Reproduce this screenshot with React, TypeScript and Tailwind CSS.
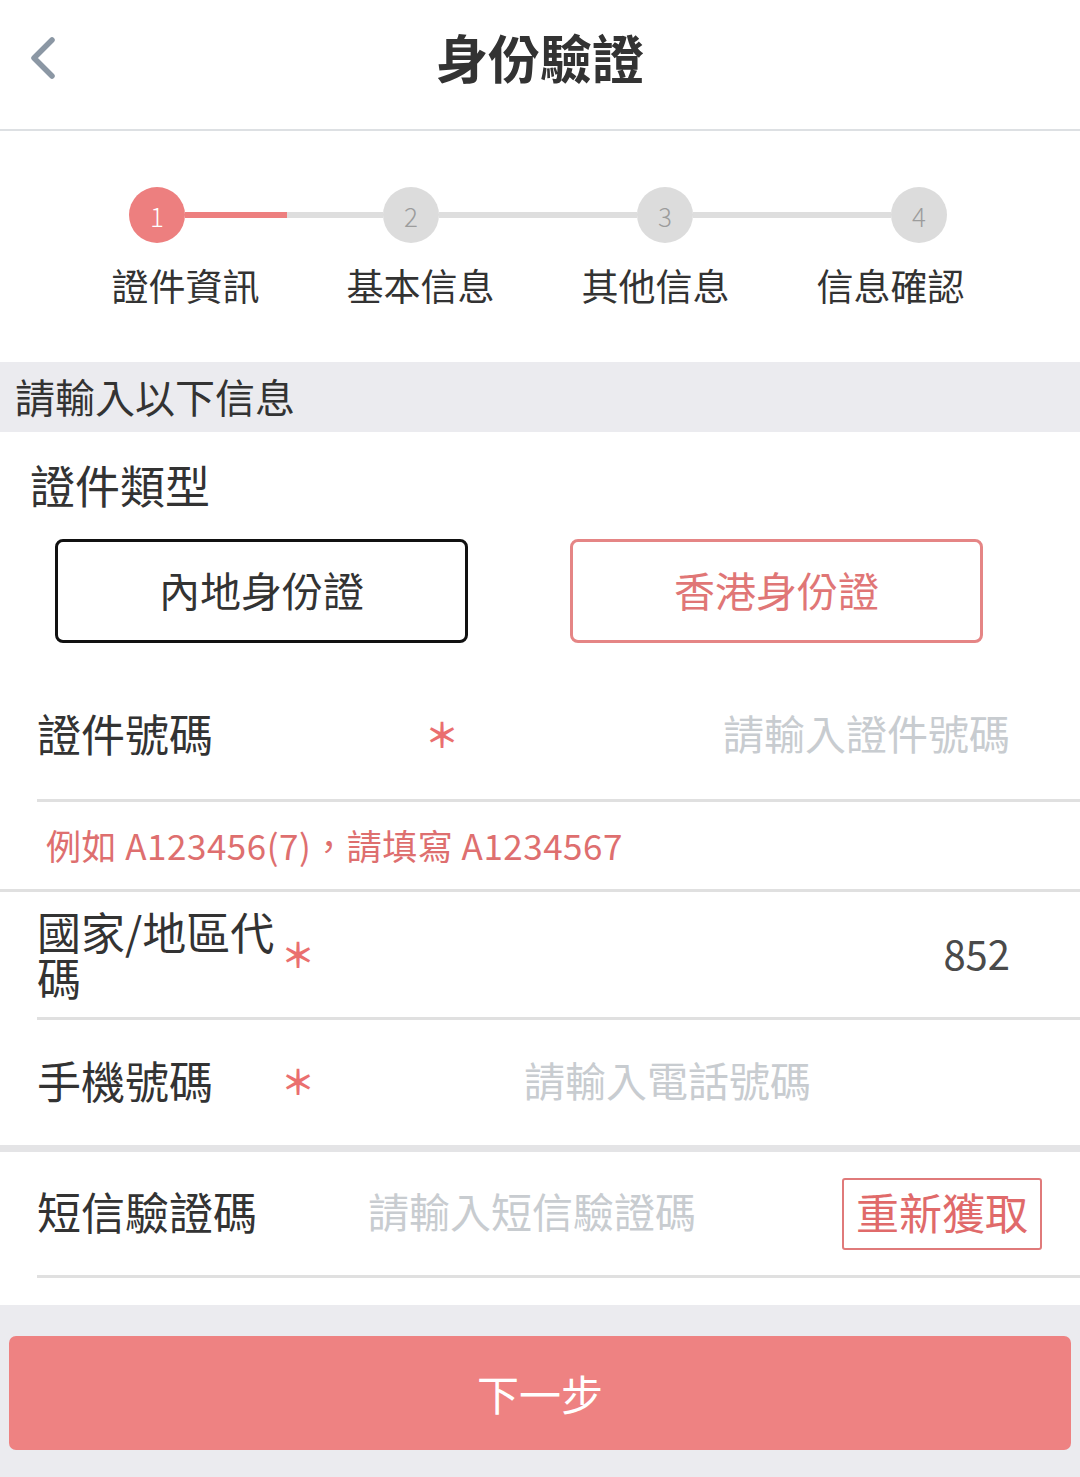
import React from "react";

const font = { fontFamily: '"Noto Sans CJK TC", "Noto Sans", sans-serif' } as const;

function Star() {
  return (
    <span className="text-[#ea6f6f] text-[34px] font-bold leading-none inline-block translate-y-[1px]">
      ＊
    </span>
  );
}

export default function App() {
  return (
    <div className="w-[1080px] h-[1477px] bg-white text-[#333333] overflow-hidden" style={font}>
      {/* Header */}
      <div className="h-[131px] flex items-start pt-[28px] border-b-2 border-[#dde0e3]">
        <div className="pl-[27px] pt-[8px] w-[100px]">
          <svg width="34" height="44" viewBox="0 0 34 44">
            <polyline points="25,4 7,22 25,40" fill="none" stroke="#8b97a4" strokeWidth="5.5" strokeLinecap="round" strokeLinejoin="round" />
          </svg>
        </div>
        <div className="flex-1 text-center text-[52px] font-bold leading-[58px] pr-[100px]">身份驗證</div>
      </div>

      {/* Steps */}
      <div className="h-[231px] pt-[56px]">
        <div className="flex items-center pl-[129px]">
          <div className="w-[56px] h-[56px] rounded-full bg-[#ed7f7f] text-white text-[26px] flex items-center justify-center font-light">1</div>
          <div className="w-[198px] h-[6px] flex">
            <div className="w-[102px] bg-[#ed7f7f]"></div>
            <div className="flex-1 bg-[#dedede]"></div>
          </div>
          <div className="w-[56px] h-[56px] rounded-full bg-[#dcdcdc] text-[#9c9c9c] text-[26px] flex items-center justify-center font-light">2</div>
          <div className="w-[198px] h-[6px] bg-[#dedede]"></div>
          <div className="w-[56px] h-[56px] rounded-full bg-[#dcdcdc] text-[#9c9c9c] text-[26px] flex items-center justify-center font-light">3</div>
          <div className="w-[198px] h-[6px] bg-[#dedede]"></div>
          <div className="w-[56px] h-[56px] rounded-full bg-[#dcdcdc] text-[#9c9c9c] text-[26px] flex items-center justify-center font-light">4</div>
        </div>
        <div className="grid grid-cols-4 w-[940px] ml-[68px] mt-[17px] text-[37px] leading-[50px] text-center text-[#333]">
          <div>證件資訊</div>
          <div>基本信息</div>
          <div>其他信息</div>
          <div>信息確認</div>
        </div>
      </div>

      {/* Gray bar */}
      <div className="h-[70px] bg-[#ebebef] flex items-center pl-[15px] pb-[2px] text-[40px] leading-none">請輸入以下信息</div>

      {/* Certificate type */}
      <div className="h-[240px]">
        <div className="pl-[30px] pt-[28px] text-[45px] leading-[50px]">證件類型</div>
        <div className="flex mt-[29px] pl-[55px]">
          <div className="w-[413px] h-[104px] border-[3px] border-[#111] rounded-[8px] flex items-center justify-center text-[41px] pb-[2px]">內地身份證</div>
          <div className="w-[413px] h-[104px] ml-[102px] border-[3px] border-[#e58585] rounded-[8px] flex items-center justify-center text-[41px] pb-[2px] text-[#e07676]">香港身份證</div>
        </div>
      </div>

      {/* Cert number */}
      <div className="h-[130px] ml-[37px] pb-[6px] border-b-[3px] border-[#e0e0e0] flex items-center">
        <div className="w-[388px] text-[44px] leading-none">證件號碼</div>
        <Star />
        <div className="flex-1 text-right pr-[70px] text-[41px] leading-none text-[#c8ccd0]">請輸入證件號碼</div>
      </div>

      {/* Hint */}
      <div className="h-[90px] pb-[2px] border-b-[3px] border-[#e0e0e0] flex items-center pl-[46px] text-[35px] tracking-[0.5px] text-[#de6f6f] leading-none">
        例如 A123456(7)，請填寫 A1234567
      </div>

      {/* Country code */}
      <div className="h-[128px] ml-[37px] pb-[4px] border-b-[3px] border-[#e0e0e0] flex items-center">
        <div className="w-[244px] text-[44px] leading-[46px] pt-[2px]">國家/地區代碼</div>
        <Star />
        <div className="flex-1 text-right pr-[70px] text-[40px] leading-none text-[#4a4a4a]">852</div>
      </div>

      {/* Mobile */}
      <div className="h-[125px] pb-[6px] flex items-center pl-[37px]">
        <div className="w-[244px] text-[44px] leading-none">手機號碼</div>
        <Star />
        <div className="ml-[209px] text-[41px] leading-none text-[#c8ccd0]">請輸入電話號碼</div>
      </div>
      <div className="h-[7px] bg-[#e4e4e6]"></div>

      {/* SMS */}
      <div className="h-[126px] ml-[37px] border-b-[3px] border-[#e0e0e0] flex items-center">
        <div className="w-[331px] text-[44px] leading-none pb-[6px]">短信驗證碼</div>
        <div className="flex-1 text-[41px] leading-none text-[#c8ccd0] pb-[6px]">請輸入短信驗證碼</div>
        <div className="w-[200px] h-[72px] mr-[38px] border-2 border-[#e07a7a] rounded-[3px] flex items-center justify-center text-[43px] leading-none text-[#e06a6a] pb-[4px]">重新獲取</div>
      </div>

      <div className="h-[27px] bg-white"></div>

      {/* Bottom */}
      <div className="bg-[#ebebef] h-[172px] pt-[31px] px-[9px]">
        <div className="h-[114px] rounded-[7px] bg-[#ee8282] flex items-center justify-center text-white text-[42px] leading-none">下一步</div>
      </div>
    </div>
  );
}
